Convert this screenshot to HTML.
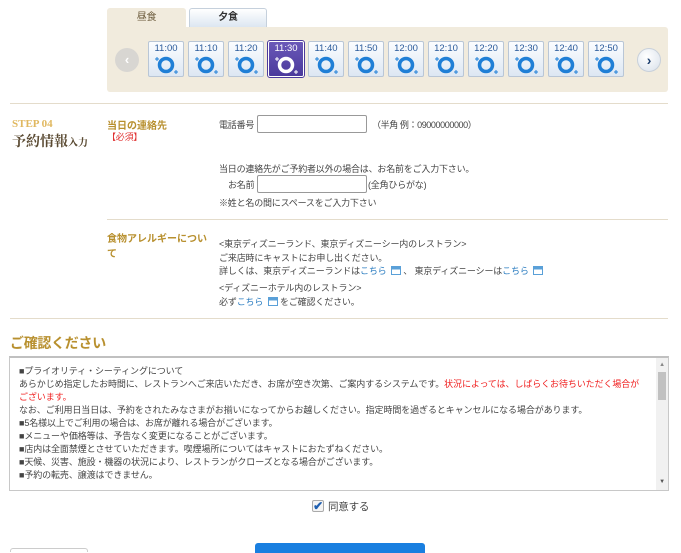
<!DOCTYPE html>
<html><head><meta charset="utf-8"><style>
*{margin:0;padding:0;box-sizing:border-box}
body{width:681px;height:550px;overflow:hidden;background:#fff;position:relative;font-family:"Liberation Sans","Noto Sans CJK JP",sans-serif;font-size:9px;letter-spacing:-0.2px;color:#444}
.a{position:absolute;white-space:nowrap}
.slot{position:absolute;top:41px;width:36px;height:36px;border:1px solid #b9c6d6;background:linear-gradient(#fbfdff,#dde7f3);border-radius:2px;letter-spacing:0}
.slot .t{position:absolute;top:1px;left:0;width:100%;text-align:center;font-size:9.5px;color:#2a5a9a}
.slot svg{position:absolute;left:2px;top:11px}
.sel{background:linear-gradient(#6a58b8,#4b3a9c);border:1px solid #fff;outline:1px solid #4b3a9c}
.sel .t{color:#fff}
.gold{color:#b8902f;font-weight:bold;letter-spacing:0}
.inp{position:absolute;border:1px solid #999;background:#fff;height:18px;width:110px;border-radius:2px}
.link{color:#2a7cc0}
.ic{display:inline-block;width:10px;height:9px;border:1px solid #5aa0d8;background:linear-gradient(#5aa0d8 35%,#fff 35%);vertical-align:-1px;margin-left:2px;position:relative}
.hr{position:absolute;height:1px;background:#e4dccb}
.box div{line-height:13px}
</style></head><body>
<div class="a" style="left:107px;top:8px;width:79px;height:20px;background:#f1ebdd;border-radius:3px 3px 0 0;text-align:center;line-height:20px;color:#6b5a3a;font-size:10px">昼食</div>
<div class="a" style="left:189px;top:8px;width:78px;height:19px;background:linear-gradient(#fff,#dce6f1);border:1px solid #c5d0dc;border-bottom:none;border-radius:3px 3px 0 0;text-align:center;line-height:18px;color:#333;font-weight:bold;font-size:10px">夕食</div>
<div class="a" style="left:107px;top:27px;width:561px;height:65px;background:#f1ebdd;border-radius:0 3px 3px 3px"></div>
<div class="a" style="left:115px;top:48px;width:24px;height:24px;border-radius:50%;background:#d8d6d2;color:#fff;text-align:center;line-height:24px;font-size:13px;font-weight:bold">‹</div>
<div class="a" style="left:637px;top:48px;width:24px;height:24px;border-radius:50%;background:radial-gradient(circle at 40% 35%,#fff,#d8e0ea);border:1px solid #c8d0da;color:#1d3f6e;text-align:center;line-height:22px;font-size:14px;font-weight:bold">›</div>
<div id="slots"></div>
<script>
var times=["11:00","11:10","11:20","11:30","11:40","11:50","12:00","12:10","12:20","12:30","12:40","12:50"],h="";
times.forEach(function(t,i){var s=i==3,c=s?"#fff":"#1f7fd6";
h+='<div class="slot'+(s?' sel':'')+'" style="left:'+(148+i*40)+'px"><div class="t">'+t+'</div><svg width="30" height="22" viewBox="0 0 30 22"><circle cx="15" cy="12" r="6.5" fill="none" stroke="'+c+'" stroke-width="3.5"/><path d="M4 6h4M6 4v4M23 19h4M25 17v4" stroke="'+c+'" stroke-width="1"/></svg></div>';});
document.getElementById("slots").innerHTML=h;
</script>
<div class="hr" style="left:10px;top:103px;width:658px"></div>
<div class="a" style="left:12px;top:118px;color:#e0b860;font-family:'Liberation Serif',serif;font-weight:bold;font-size:11px;letter-spacing:0">STEP 04</div>
<div class="a" style="left:12px;top:131px;color:#5a4a32;font-weight:bold;font-size:14px;letter-spacing:0;font-family:'Liberation Serif','Noto Serif CJK SC',serif">予約情報<span style="font-size:10px">入力</span></div>
<div class="a gold" style="left:107px;top:117px;font-size:10px">当日の連絡先</div>
<div class="a" style="left:107px;top:130px;color:#e03030;font-size:9px">【必須】</div>
<div class="a" style="left:219px;top:118px">電話番号</div>
<div class="inp" style="left:257px;top:115px"></div>
<div class="a" style="left:372px;top:118px;letter-spacing:-0.4px">（半角 例：09000000000）</div>
<div class="a" style="left:219px;top:162px">当日の連絡先がご予約者以外の場合は、お名前をご入力下さい。</div>
<div class="a" style="left:228px;top:178px">お名前</div>
<div class="inp" style="left:257px;top:175px"></div>
<div class="a" style="left:368px;top:178px">(全角ひらがな)</div>
<div class="a" style="left:219px;top:196px">※姓と名の間にスペースをご入力下さい</div>
<div class="hr" style="left:107px;top:219px;width:561px"></div>
<div class="a gold" style="left:107px;top:232px;font-size:10px;line-height:15px">食物アレルギーについ<br>て</div>
<div class="a" style="left:219px;top:238px;line-height:13.5px;letter-spacing:-0.15px">&lt;東京ディズニーランド、東京ディズニーシー内のレストラン&gt;<br>ご来店時にキャストにお申し出ください。<br>詳しくは、東京ディズニーランドは<span class="link">こちら</span> <span class="ic"></span> 、 東京ディズニーシーは<span class="link">こちら</span> <span class="ic"></span></div>
<div class="a" style="left:219px;top:282px;line-height:13.5px;letter-spacing:-0.15px">&lt;ディズニーホテル内のレストラン&gt;<br>必ず<span class="link">こちら</span> <span class="ic"></span> をご確認ください。</div>
<div class="hr" style="left:10px;top:318px;width:658px"></div>
<div class="a" style="left:10px;top:333px;color:#b8902f;font-weight:bold;font-size:14px;letter-spacing:-0.3px">ご確認ください</div>
<div class="a box" style="left:9px;top:356px;width:660px;height:135px;border:1px solid #c8c8c8;border-top:2px solid #c0c0c0;padding:7px 0 0 9px;font-size:9px;letter-spacing:-0.1px;color:#444">
<div>■プライオリティ・シーティングについて</div>
<div>あらかじめ指定したお時間に、レストランへご来店いただき、お席が空き次第、ご案内するシステムです。<span style="color:#f02020">状況によっては、しばらくお待ちいただく場合が</span></div>
<div style="color:#f02020">ございます。</div>
<div>なお、ご利用日当日は、予約をされたみなさまがお揃いになってからお越しください。指定時間を過ぎるとキャンセルになる場合があります。</div>
<div>■5名様以上でご利用の場合は、お席が離れる場合がございます。</div>
<div>■メニューや価格等は、予告なく変更になることがございます。</div>
<div>■店内は全面禁煙とさせていただきます。喫煙場所についてはキャストにおたずねください。</div>
<div>■天候、災害、施設・機器の状況により、レストランがクローズとなる場合がございます。</div>
<div>■予約の転売、譲渡はできません。</div>
<div style="position:absolute;right:0;top:0;width:12px;height:100%;background:#f1f1f1"><div style="position:absolute;left:2px;top:14px;width:8px;height:28px;background:#c1c1c1"></div><div style="position:absolute;top:1px;width:12px;text-align:center;font-size:6px;color:#888">▲</div><div style="position:absolute;bottom:1px;width:12px;text-align:center;font-size:6px;color:#555">▼</div></div>
</div>
<div class="a" style="left:312px;top:500px;width:12px;height:12px;border:1px solid #aaa;border-radius:2px;background:#f4f4f4;color:#1f5fb0;font-size:12px;line-height:10px;text-align:center;font-weight:bold">✔</div>
<div class="a" style="left:328px;top:499px;font-size:10.5px">同意する</div>
<div class="a" style="left:10px;top:548px;width:78px;height:4px;border:1px solid #ccc;border-bottom:none;border-radius:3px 3px 0 0"></div>
<div class="a" style="left:255px;top:543px;width:170px;height:10px;background:#1a7fe0;border-radius:3px 3px 0 0"></div>
</body></html>
